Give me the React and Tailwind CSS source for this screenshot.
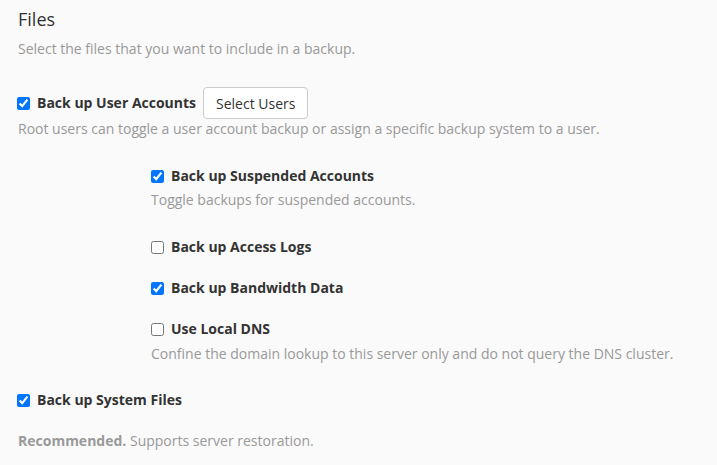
import React from 'react';

const Check = ({ checked, label }) => (
  <label className="flex h-[20px] items-center gap-[7px] text-[14px] font-bold leading-[20px] text-[#333]">
    <input type="checkbox" defaultChecked={checked} className="m-0 h-[13px] w-[13px] accent-[#0075ff]" />
    <span>{label}</span>
  </label>
);

const Hint = ({ children, className = '' }) => (
  <p className={`text-[14px] leading-[20px] text-[#999] ${className}`}>{children}</p>
);

export default function App() {
  return (
    <div className="min-h-[465px] w-full bg-[#fafafa] pl-[17px] pt-[6px] font-['Open_Sans',sans-serif]">
      <h2 className="pl-[1px] text-[18px] leading-[26px] text-[#333]">Files</h2>
      <Hint className="mt-[7px] pl-[1px]">Select the files that you want to include in a backup.</Hint>

      <div className="mt-[28px] flex h-[32px] items-center gap-[7px]">
        <Check checked label="Back up User Accounts" />
        <button className="h-[32px] rounded-[4px] border border-[#ccc] bg-white px-[12px] text-[14px] text-[#333]">
          Select Users
        </button>
      </div>
      <Hint className="pl-[1px]">Root users can toggle a user account backup or assign a specific backup system to a user.</Hint>

      <div className="ml-[134px]">
        <div className="mt-[27px]">
          <Check checked label="Back up Suspended Accounts" />
        </div>
        <Hint className="mt-[4px]">Toggle backups for suspended accounts.</Hint>
        <div className="mt-[27px]">
          <Check label="Back up Access Logs" />
        </div>
        <div className="mt-[21px]">
          <Check checked label="Back up Bandwidth Data" />
        </div>
        <div className="mt-[21px]">
          <Check label="Use Local DNS" />
        </div>
        <Hint className="mt-[5px]">Confine the domain lookup to this server only and do not query the DNS cluster.</Hint>
      </div>

      <div className="mt-[26px]">
        <Check checked label="Back up System Files" />
      </div>
      <Hint className="mt-[21px] pl-[1px]">
        <span className="font-bold">Recommended.</span> Supports server restoration.
      </Hint>
    </div>
  );
}
